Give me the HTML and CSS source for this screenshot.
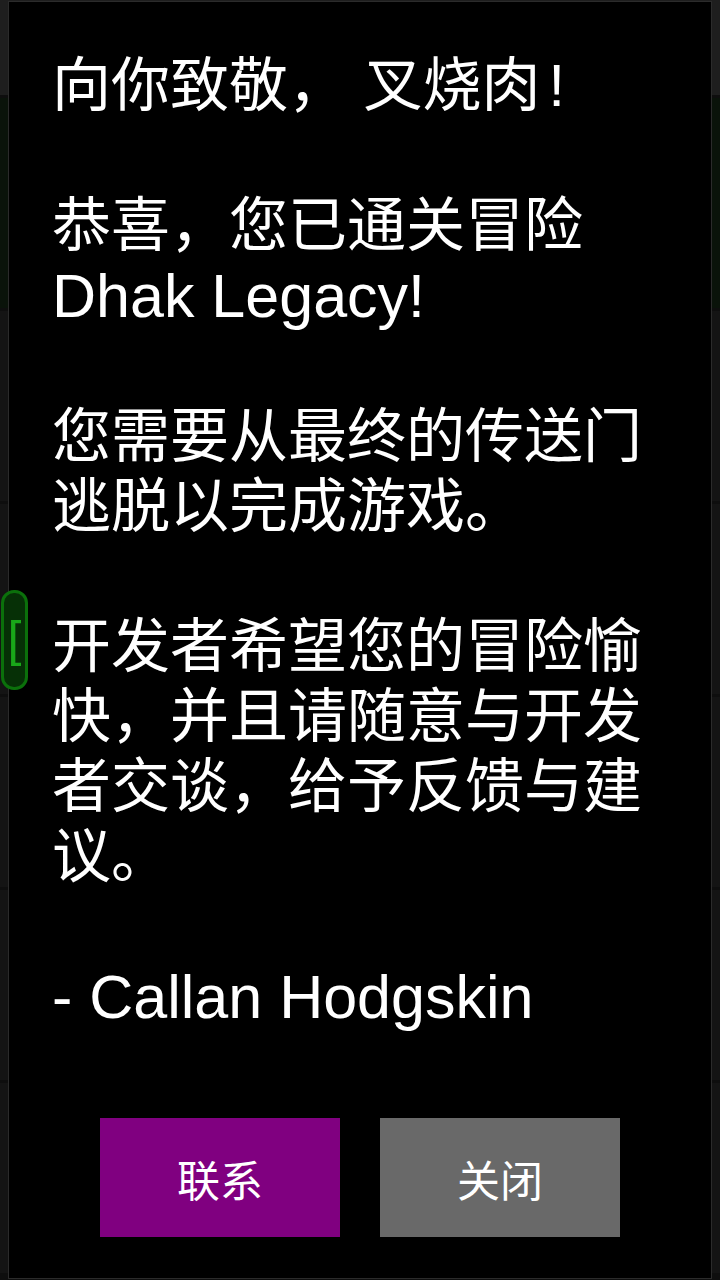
FILE: index.html
```html
<!DOCTYPE html>
<html lang="zh-CN">
<head>
    <meta charset="UTF-8">
    <meta name="viewport" content="width=720, initial-scale=1.0">
    <title>Dhak Legacy</title>
    <link rel="stylesheet" href="styles.css">
</head>
<body>
    <div class="backdrop">
        <div class="tile tile-top"></div>
        <div class="tile tile-green"></div>
        <div class="tile"></div>
        <div class="tile"></div>
        <div class="tile"></div>
        <div class="tile"></div>
        <div class="tile"></div>
    </div>

    <div class="dialog">
        <div class="message">
            <p>向你致敬， 叉烧肉<span class="bang">!</span></p>
            <p>恭喜，您已通关冒险<br><span class="latin">Dhak Legacy!</span></p>
            <p>您需要从最终的传送门逃脱以完成游戏。</p>
            <p>开发者希望您的冒险愉快，并且请随意与开发者交谈，给予反馈与建议。</p>
            <p class="signature"><span class="latin">- Callan Hodgskin</span></p>
        </div>
        <div class="actions">
            <button class="btn btn-contact">联系</button>
            <button class="btn btn-close">关闭</button>
        </div>
    </div>

    <div class="side-tab">[</div>
</body>
</html>
```

FILE: styles.css
```css
html, body {
    margin: 0;
    padding: 0;
}
body {
    width: 720px;
    height: 1280px;
    background-color: #0e0e0e;
    font-family: "Liberation Sans", "Noto Sans CJK SC", sans-serif;
    position: relative;
    overflow: hidden;
}

/* game screen showing behind the dialog */
.backdrop {
    position: absolute;
    left: 0;
    top: 0;
    width: 720px;
    height: 1280px;
    display: flex;
    flex-direction: column;
    gap: 3px;
}
.tile {
    height: 190px;
    background-color: #141414;
}
.tile-top {
    height: 95px;
    background-color: #1e1e1e;
}
.tile-green {
    height: 210px;
    background-color: #0a130a;
}

.dialog {
    position: relative;
    margin: 1px 8px;
    height: 1278px;
    box-sizing: border-box;
    border: 1px solid #2b2b2b;
    background-color: #000000;
    display: flex;
    flex-direction: column;
}
.message {
    flex: 1;
    padding: 49px 44px 0 43px;
    color: #ffffff;
    font-size: 59px;
    line-height: 70px;
}
.message p {
    margin: 0 0 70px 0;
}
.message .signature {
    margin-bottom: 0;
}
.message .latin {
    font-size: 61px;
}
.message .bang {
    margin-left: 8px;
}

.actions {
    display: flex;
    justify-content: center;
    gap: 40px;
    padding-bottom: 41px;
}
.btn {
    width: 240px;
    height: 119px;
    border: none;
    border-radius: 0;
    color: #ffffff;
    font-family: "Noto Sans CJK SC", sans-serif;
    font-size: 43px;
    padding: 0;
    cursor: pointer;
}
.btn-contact {
    background-color: #800080;
}
.btn-close {
    background-color: #696969;
}

.side-tab {
    position: absolute;
    left: 1px;
    top: 590px;
    width: 21px;
    height: 94px;
    border: 3px solid #0b700b;
    border-radius: 13px;
    background-color: #063006;
    color: #19a819;
    font-family: "Liberation Sans", sans-serif;
    font-size: 50px;
    line-height: 92px;
    text-align: center;
}
```
